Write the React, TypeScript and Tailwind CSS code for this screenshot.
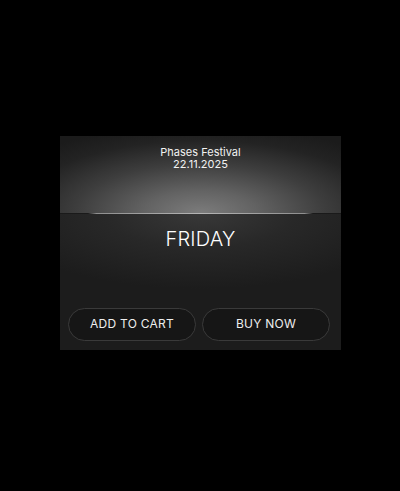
export default function App() {
  return (
    <div className="flex h-[491px] w-[400px] items-center justify-center bg-black font-['Inter',sans-serif]">
      <div className="mb-[6px] ml-[1px] flex h-[214px] w-[281px] flex-col overflow-hidden bg-[#1a1a1a]">
        {/* glow header */}
        <div className="flex h-[77px] flex-col items-center bg-[radial-gradient(ellipse_80%_115%_at_50%_100%,#7c7c7c_0%,#636363_25%,#3e3e3e_55%,#232323_82%,#1b1b1b_100%)] pt-[10px] text-[11px] leading-[12.5px] text-[#f2f2f2]">
          <span>Phases Festival</span>
          <span>22.11.2025</span>
        </div>
        <div className="h-[1.5px] bg-[linear-gradient(90deg,transparent_10%,#8f8f8f_13%,#b5b5b5_50%,#8f8f8f_87%,transparent_90%)]" />
        <div className="flex flex-1 flex-col bg-[radial-gradient(ellipse_75%_55%_at_50%_0%,#383838_0%,#282828_45%,#1c1c1c_100%)]">
          <div className="mt-[13px] text-center text-[20px] font-light leading-[24px] tracking-[0.01em] text-white">
            FRIDAY
          </div>
          <div className="mt-auto mb-[9px] flex gap-[6px] pl-[8px]">
            <button className="h-[33px] w-[128px] rounded-full border border-[#3a3a3a] bg-[#161616] text-[12px] tracking-[0.02em] text-[#eeeeee]">
              ADD TO CART
            </button>
            <button className="h-[33px] w-[128px] rounded-full border border-[#3a3a3a] bg-[#161616] text-[12px] tracking-[0.02em] text-[#eeeeee]">
              BUY NOW
            </button>
          </div>
        </div>
      </div>
    </div>
  );
}
